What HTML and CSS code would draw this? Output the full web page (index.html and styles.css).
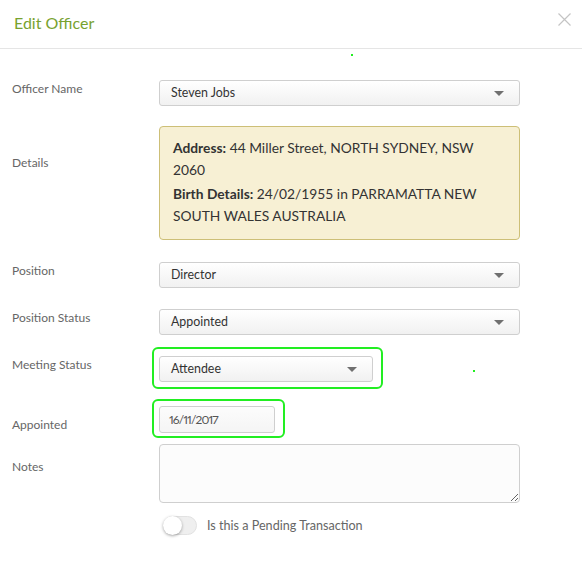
FILE: index.html
```html
<!DOCTYPE html>
<html>
<head>
<meta charset="utf-8">
<link rel="stylesheet" href="styles.css">
</head>
<body>
<div class="modal">
  <header class="modal-header">
    <h1 class="title">Edit Officer</h1>
    <span class="close" aria-label="Close">
      <svg width="13" height="13" viewBox="0 0 13 13"><path d="M0.5 0.5 L12.5 12.5 M12.5 0.5 L0.5 12.5" stroke="#c4c4c4" stroke-width="1.2" fill="none"/></svg>
    </span>
  </header>
  <form class="modal-body">
    <div class="row row-name">
      <label class="lbl">Officer Name</label>
      <div class="select">Steven Jobs<span class="caret"></span></div>
    </div>
    <div class="row row-details">
      <label class="lbl lbl-details">Details</label>
      <div class="details">
        <p><b>Address:</b> 44 Miller Street, NORTH SYDNEY, NSW 2060</p>
        <p><b>Birth Details:</b> 24/02/1955 in PARRAMATTA NEW SOUTH WALES AUSTRALIA</p>
      </div>
    </div>
    <div class="row">
      <label class="lbl">Position</label>
      <div class="select">Director<span class="caret"></span></div>
    </div>
    <div class="row">
      <label class="lbl">Position Status</label>
      <div class="select">Appointed<span class="caret"></span></div>
    </div>
    <div class="row row-meeting">
      <label class="lbl">Meeting Status</label>
      <div class="select select-short hl hl-meeting">Attendee<span class="caret"></span></div>
    </div>
    <div class="row row-appointed">
      <label class="lbl lbl-appointed">Appointed</label>
      <div class="date hl hl-date">16/11/2017</div>
    </div>
    <div class="row row-notes">
      <label class="lbl lbl-notes">Notes</label>
      <textarea class="notes"></textarea>
    </div>
    <div class="row row-toggle">
      <span class="lbl"></span>
      <span class="toggle"><span class="knob"></span></span>
      <span class="toggle-text">Is this a Pending Transaction</span>
    </div>
  </form>
  <span class="dot dot-a"></span>
  <span class="dot dot-b"></span>
</div>
</body>
</html>
```
FILE: styles.css
```css
html, body {
  margin: 0;
  padding: 0;
  background: #fff;
}
body {
  font-family: Lato, "Open Sans", sans-serif;
  color: #333;
}
.modal {
  position: relative;
  width: 582px;
  height: 564px;
  background: #fff;
}
.modal-header {
  height: 48px;
  border-bottom: 1px solid #e5e5e5;
  display: flex;
  align-items: flex-start;
  justify-content: space-between;
  padding: 0 11px 0 14px;
}
.title {
  margin: 0;
  font-size: 16px;
  font-weight: 400;
  line-height: 46px;
  color: #78a22f;
}
.close {
  margin-top: 13px;
  display: block;
  width: 13px;
  height: 13px;
}
.close svg { display: block; }
.modal-body {
  padding: 31px 0 0 12px;
  margin: 0;
}
.row {
  display: flex;
  align-items: flex-start;
  margin-bottom: 21px;
}
.lbl {
  width: 147px;
  flex: none;
  font-size: 12px;
  line-height: 16px;
  color: #666;
  padding-top: 1px;
}
.row-name { margin-bottom: 20px; }
.row-details { margin-bottom: 22px; }
.row-meeting { margin-bottom: 24px; }
.row-appointed { margin-bottom: 11px; }
.row-notes { margin-bottom: 13px; }
.lbl-details { padding-top: 29px; }
.lbl-appointed { padding-top: 11px; }
.lbl-notes { padding-top: 15px; }

.select {
  position: relative;
  box-sizing: border-box;
  width: 361px;
  height: 26px;
  border: 1px solid #cfcfcf;
  border-radius: 3px;
  background: linear-gradient(#ffffff, #f1f1f1);
  padding-left: 11px;
  font-size: 12.4px;
  line-height: 24px;
  color: #333;
}
.select-short { width: 214px; }
.caret {
  position: absolute;
  right: 15px;
  top: 10px;
  width: 0;
  height: 0;
  border-left: 5px solid transparent;
  border-right: 5px solid transparent;
  border-top: 5px solid #707070;
}
.hl { position: relative; }
.hl::after {
  content: "";
  position: absolute;
  border: 2px solid #22ee22;
  border-radius: 6px;
  pointer-events: none;
}
.hl-meeting::after {
  top: -10px;
  left: -8px;
  right: -11px;
  bottom: -8px;
}
.hl-date::after {
  top: -8px;
  left: -8px;
  right: -11px;
  bottom: -6px;
}
.details {
  box-sizing: border-box;
  width: 361px;
  height: 114px;
  background: #f7f0d4;
  border: 1px solid #cdbf77;
  border-radius: 4px;
  padding: 10px 14px 0 13px;
  font-size: 13.8px;
  line-height: 22px;
  color: #333;
}
.details p {
  margin: 0 0 2px 0;
  width: 312px;
}
.details b { font-weight: 700; }
.date {
  box-sizing: border-box;
  width: 116px;
  height: 27px;
  border: 1px solid #cfcfcf;
  border-radius: 3px;
  background: linear-gradient(#fcfcfc, #f5f5f5);
  padding-left: 9px;
  font-size: 12px;
  line-height: 25px;
  letter-spacing: -0.9px;
  font-variant-numeric: proportional-nums;
  color: #555;
}
.notes {
  box-sizing: border-box;
  width: 361px;
  height: 59px;
  border: 1px solid #cfcfcf;
  border-radius: 4px;
  background: #fcfcfc;
  margin: 0;
  padding: 4px;
  font-family: inherit;
}
.row-toggle { align-items: center; }
.toggle {
  position: relative;
  box-sizing: border-box;
  margin-left: 4px;
  width: 34px;
  height: 19px;
  border-radius: 10px;
  background: #efefef;
  border: 1px solid #e2e2e2;
  flex: none;
}
.knob {
  position: absolute;
  left: -1px;
  top: -1px;
  width: 19px;
  height: 19px;
  border-radius: 50%;
  background: #fff;
  box-shadow: 0 1px 3px rgba(0,0,0,0.35);
}
.toggle-text {
  margin-left: 10px;
  font-size: 12.6px;
  color: #666;
}
.dot {
  position: absolute;
  width: 2px;
  height: 2px;
  background: #22ee22;
}
.dot-a { left: 351px; top: 54px; }
.dot-b { left: 473px; top: 370px; }
```
